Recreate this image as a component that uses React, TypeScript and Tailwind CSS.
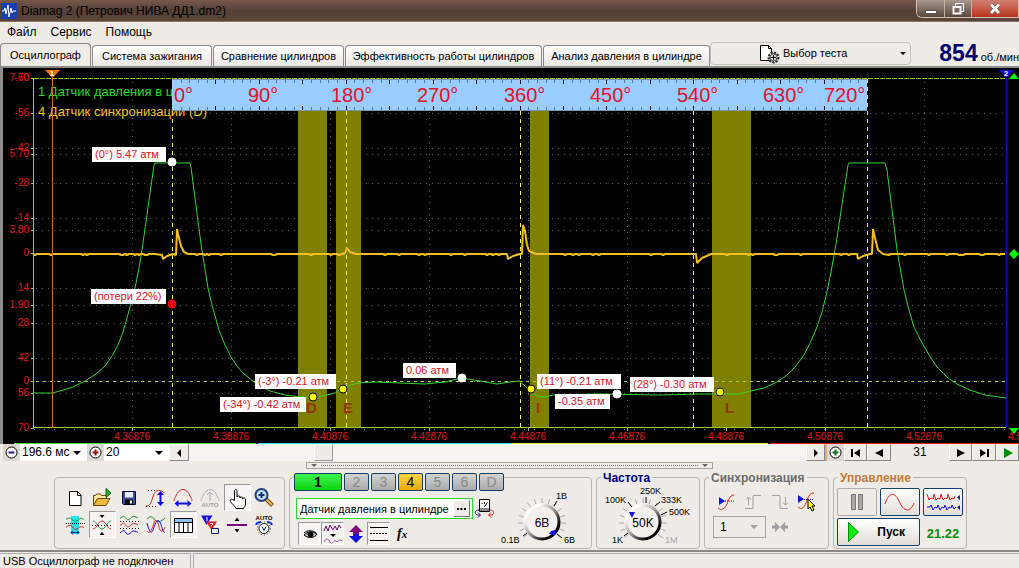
import { useState } from 'react';
import type { ReactNode } from 'react';
import clsx from 'clsx';

const TABS = [
  { label: 'Осциллограф', width: 'w-[91px]' },
  { label: 'Система зажигания', width: 'w-[120px]' },
  { label: 'Сравнение цилиндров', width: 'w-[131px]' },
  { label: 'Эффективность работы цилиндров', width: 'w-[197px]' },
  { label: 'Анализ давления в цилиндре', width: 'w-[167px]' },
];

const CHANNELS = ['1', '2', '3', '4', '5', '6', 'D'];

const Y_LABELS: [string, number][] = [
  ['7.60', 78],
  ['-70', 78],
  ['-56', 113],
  ['-42', 148],
  ['5.70', 154],
  ['-28', 183],
  ['-14', 218],
  ['3.80', 230],
  ['0', 253],
  ['14', 288],
  ['1.90', 305],
  ['28', 323],
  ['42', 358],
  ['0', 381],
  ['56', 393],
  ['70', 428],
];

const X_LABELS: [string, number][] = [
  ['4.36876', 132],
  ['4.38876', 231],
  ['4.40876', 330],
  ['4.42876', 429],
  ['4.44876', 528],
  ['4.46876', 627],
  ['4.48876', 726],
  ['4.50876', 825],
  ['4.52876', 924],
  ['4.54876', 1026],
];

const BANDS = [
  { x: 298, width: 29, letter: 'D', lx: 306 },
  { x: 336, width: 25, letter: 'E', lx: 343 },
  { x: 530, width: 19, letter: 'I', lx: 536 },
  { x: 712, width: 39, letter: 'L', lx: 725 },
];

const ANGLES: [string, number][] = [
  ['0°', 174],
  ['90°', 248],
  ['180°', 331],
  ['270°', 417],
  ['360°', 504],
  ['450°', 590],
  ['540°', 677],
  ['630°', 763],
  ['720°', 824],
];

const CALLOUTS = [
  { text: '(0°) 5.47 атм', x: 92, y: 147, w: 74 },
  { text: '(потери 22%)', x: 91, y: 289, w: 75 },
  { text: '(-3°) -0.21 атм', x: 255, y: 374, w: 81 },
  { text: '(-34°) -0.42 атм', x: 220, y: 397, w: 86 },
  { text: '0.06 атм', x: 403, y: 363, w: 53 },
  { text: '(11°) -0.21 атм', x: 537, y: 374, w: 84 },
  { text: '-0.35 атм', x: 555, y: 394, w: 55 },
  { text: '(28°) -0.30 атм', x: 630, y: 377, w: 84 },
];

const DOTS: [number, number, string, string][] = [
  [172, 162, '#fff', '#fff'],
  [462, 378, '#fff', '#fff'],
  [617, 394, '#fff', '#fff'],
  [172, 304, '#f00000', '#f00000'],
  [313, 397, '#ff0', '#000'],
  [343, 389, '#ff0', '#000'],
  [531, 389, '#ff0', '#000'],
  [720, 392, '#ff0', '#000'],
];

const PRESSURE =
  'M33 393 L52 393 L60 391 L73 387 L85 381 L96 374 L105 366 L112 356 L118 345 L123 332 L127 318 L131 303 L135 288 L139 268 L142 250 L154 165 L155 163 L190 163 L191 167 L201 244 L208 288 L212 305 L219 330 L225 345 L231 357 L237 366 L243 373 L254 382 L270 391 L285 395 L300 397 L318 397 L335 393 L343 388 L357 383 L375 382 L400 383 L425 384 L445 382 L461 378 L480 381 L497 384 L510 382 L519 381 L524 385 L531 391 L537 396 L545 397 L553 395 L600 394 L660 395 L700 394 L738 394 L751 391 L764 388 L775 383 L786 376 L795 367 L804 355 L811 341 L817 327 L822 312 L827 292 L831 272 L836 244 L848 165 L849 163 L885 163 L887 170 L897 250 L904 290 L909 310 L914 327 L921 341 L929 355 L937 367 L948 378 L957 384 L970 390 L985 395 L1006 398';

// x, y pairs replacing the flat zero line around every sync pulse
const PULSES: [number, number][] = [
  [162, 255], [163, 259], [167, 256], [173, 254], [176, 255], [177, 229], [178, 234], [181, 246], [184, 252], [188, 254],
  [345, 253], [347, 248], [350, 252], [356, 254],
  [507, 254], [508, 259], [513, 256], [520, 254], [522, 254], [523, 225], [525, 231], [527, 245], [529, 251], [536, 254],
  [696, 254], [697, 263], [702, 258], [711, 254],
  [857, 254], [858, 259], [863, 256], [870, 254], [872, 254], [873, 229], [875, 238], [878, 250], [883, 254],
];

function syncPath() {
  const points: [number, number][] = [...PULSES];
  let seed = 7;
  for (let x = 33; x <= 1006; x += 2) {
    seed = (seed * 1103 + 377) % 7919;
    const near = PULSES.some(([px]) => Math.abs(px - x) < 6);
    if (!near) points.push([x, seed % 6 === 0 ? 255 : 254]);
  }
  points.sort((a, b) => a[0] - b[0]);
  return 'M' + points.map(([x, y]) => `${x} ${y}`).join(' L');
}

function Scope() {
  const ruler = Array.from({ length: 79 }, (_, i) => i + 1);
  return (
    <svg viewBox="3 68 1016 376" className="block h-auto w-full bg-black font-['Liberation_Sans']" role="img">
      {/* grid */}
      <g stroke="#5a5a5a" strokeDasharray="1 5" shapeRendering="crispEdges">
        {Y_LABELS.slice(2, -1).map(([, y], i) => (
          <line key={i} x1="36" x2="1006" y1={y + 0.5} y2={y + 0.5} />
        ))}
        {X_LABELS.slice(0, -1).map(([, x]) => (
          <line key={x} x1={x + 0.5} x2={x + 0.5} y1="82" y2="427" />
        ))}
      </g>
      {BANDS.map((b) => (
        <rect key={b.letter} x={b.x} y="111" width={b.width} height="316" fill="#808000" />
      ))}
      <g strokeDasharray="3 4" shapeRendering="crispEdges">
        <line x1="36" x2="1006" y1="381.5" y2="381.5" stroke="#b8c840" />
        <line x1="34" x2="1006" y1="78.5" y2="78.5" stroke="#8fc020" strokeDasharray="5 1" />
      </g>
      <g stroke="#f4f45a" strokeDasharray="4 4" shapeRendering="crispEdges">
        {[172, 346, 520, 693, 867].map((x) => (
          <line key={x} x1={x + 0.5} x2={x + 0.5} y1="79" y2="427" />
        ))}
      </g>

      {/* traces */}
      <path d={PRESSURE} fill="none" stroke="#35d435" />
      <path d={syncPath()} fill="none" stroke="#f4c020" strokeWidth="2" strokeLinejoin="bevel" />

      {/* axes */}
      <g shapeRendering="crispEdges" stroke="#9acd32">
        <path d="M33.500 78V428M33 427.500H1006" fill="none" />
        {Y_LABELS.map(([, y], i) => (
          <line key={i} x1="31" x2="34" y1={y + 0.5} y2={y + 0.5} />
        ))}
        {X_LABELS.slice(0, -1).map(([, x]) => (
          <line key={x} x1={x + 0.5} x2={x + 0.5} y1="428" y2="431" stroke="#aaa" />
        ))}
        <line x1="34" x2="1006" y1="429" y2="429" strokeDasharray="1 9" stroke="#888" />
      </g>
      <g fill="#e01818" fontSize="10">
        {Y_LABELS.map(([text, y], i) => (
          <text key={i} x="29" y={y + 3} textAnchor="end">
            {text}
          </text>
        ))}
        {X_LABELS.map(([text, x]) => (
          <text key={text} x={x} y="440" textAnchor="middle">
            {text}
          </text>
        ))}
      </g>

      <g fontSize="13">
        <text x="38" y="96" fill="#22dd22">
          1 Датчик давления в ц
        </text>
        <text x="38" y="116" fill="#f4c020">
          4 Датчик синхронизации (D)
        </text>
      </g>

      {/* crank angle ruler */}
      <rect x="172" y="79" width="695" height="32" fill="#99ccff" />
      <g shapeRendering="crispEdges">
        {ruler.map((i) => {
          const x = Math.round(172 + i * 8.6875) + 0.5;
          const major = i % 5 === 0;
          return (
            <path
              key={i}
              d={major ? `M${x} 79v5M${x} 106v5` : `M${x} 79v4M${x} 107v4`}
              stroke={major ? '#000' : '#5b7a99'}
            />
          );
        })}
        <path d="M172 79.500H867M172 110.500H867" stroke="#7d93a8" />
      </g>
      <g fill="#e3122c" fontSize="20">
        {ANGLES.map(([text, x]) => (
          <text key={text} x={x} y="102">
            {text}
          </text>
        ))}
      </g>

      {/* cursors */}
      <path d="M52.500 78V428" stroke="#d07010" shapeRendering="crispEdges" />
      <path d="M45 70h15l-7.500 8z" fill="#ff6a10" />
      <path d="M1006.500 78V428" stroke="#0808d8" shapeRendering="crispEdges" />
      <path d="M999 70h15l-7.500 8z" fill="#1010e0" />
      <g fill="#fff" fontSize="8" fontWeight="bold" textAnchor="middle">
        <text x="52" y="76">1</text>
        <text x="1006" y="76">2</text>
      </g>
      <path d="M1009 79h10l-5-6zM1009 428h10l-5 6zM1009 254l5-5 5 5-5 5z" fill="#0f0" />

      {/* valve letters, markers, callouts */}
      <g fill="#993300" fontSize="15" fontWeight="bold">
        {BANDS.map((b) => (
          <text key={b.letter} x={b.lx} y="413">
            {b.letter}
          </text>
        ))}
      </g>
      {CALLOUTS.map((c) => (
        <g key={c.text}>
          <rect x={c.x} y={c.y} width={c.w} height="15" fill="#fff" />
          <text x={c.x + 3} y={c.y + 11} fontSize="11" fill="#d8142a">
            {c.text}
          </text>
        </g>
      ))}
      {DOTS.map(([x, y, fill, stroke]) => (
        <circle key={`${x}-${y}`} cx={x} cy={y} r="4" fill={fill} stroke={stroke} />
      ))}

      {/* recorded buffer strip */}
      <g shapeRendering="crispEdges">
        <path d="M14 443.500H256" stroke="#4be04b" />
        <path d="M258 443.500H512" stroke="#2ee6f0" />
        <path d="M512 443.500H768" stroke="#f0f020" />
        <path d="M770 443.500H1019" stroke="#e81818" />
      </g>
    </svg>
  );
}

function IconButton({ label, pressed, size = 'w-[27px] h-[27px]', children }: { label: string; pressed?: boolean; size?: string; children: ReactNode }) {
  return (
    <button
      aria-label={label}
      title={label}
      className={clsx(
        'flex items-center justify-center border',
        size,
        pressed ? 'border-t-[#9a9a9a] border-l-[#9a9a9a] border-r-white border-b-white bg-[#f6f4f2]' : 'border-transparent',
      )}
    >
      <svg viewBox="0 0 24 24" className="h-6 w-6 shrink-0" fill="none" stroke="#000">
        {children}
      </svg>
    </button>
  );
}

function ToolsPanel() {
  return (
    <div className="grid h-full w-[231px] shrink-0 grid-cols-[repeat(8,27px)] content-start justify-center rounded border border-[#b9b5b1] pt-[6px]">
      <IconButton label="Новый">
        <path d="M6.500 5.500h8l3.500 3.500v10.500h-11.500z" fill="#fff" />
        <path d="M14.500 5.500v4h3.500" />
      </IconButton>
      <IconButton label="Открыть">
        <path d="M3.500 19.500v-10h2l1-1.500h4l1 1.500h5v3" fill="#ffe9a0" stroke="#6b4a10" />
        <path d="M3.500 19.500l4-7h12.500l-4 7z" fill="#f0b840" stroke="#6b4a10" />
        <path d="M16 2.500l5 4.500-5 4.500z" fill="#20b030" stroke="#0a6010" />
      </IconButton>
      <IconButton label="Сохранить">
        <path d="M5.500 5.500h13v13h-12l-1-1z" fill="#3c4c9c" stroke="#000030" />
        <path d="M8 6h8v5.500h-8z" fill="#e8eef8" stroke="none" />
        <path d="M8 13.500h8v4.500h-8z" fill="#111" stroke="none" />
        <path d="M13 14.500h2v3h-2z" fill="#fff" stroke="none" />
      </IconButton>
      <IconButton label="Размах по вертикали">
        <path d="M4 4.500h9M2 20.500h11" strokeDasharray="1 2" />
        <path d="M2 20c4 0 5-3 6.500-8s3-7.500 6-7.500 4 1 6 2.500" stroke="#e02020" />
        <path d="M16.500 7v11" stroke="#1010e0" strokeWidth="2" />
        <path d="M13 9l3.500-4 3.500 4zM13 16l3.500 4 3.500-4z" fill="#1010e0" stroke="none" />
      </IconButton>
      <IconButton label="Размах по горизонтали">
        <path d="M3 15c0-2 1-3 2-5 1.500-4 4-6.500 7-6.500s5.500 2.500 7 6.500c1 2 2 3 2 5" stroke="#e02020" />
        <path d="M6 17.500h12" stroke="#1010e0" strokeWidth="2" />
        <path d="M7.500 14l-4 3.500 4 3.500zM16.500 14l4 3.500-4 3.500z" fill="#1010e0" stroke="none" />
      </IconButton>
      <IconButton label="Авто">
        <path d="M3 15c0-2 1-3 2-5 1.500-4 4-6.500 7-6.500s5.500 2.500 7 6.500c1 2 2 3 2 5" stroke="#b0b0b0" />
        <path d="M12 6v9M9 9l3-3 3 3" stroke="#a8a8a8" />
        <text x="12" y="21" textAnchor="middle" fontSize="6" fontWeight="bold" fill="#a0a0a0" stroke="none">AUTO</text>
      </IconButton>
      <IconButton label="Рука" pressed>
        <path
          d="M9.500 14.500V5c0-2 2.500-2 2.500 0v6c0-1.500 3-1.500 3 0v1c0-1.500 2.500-1.500 2.500 0v1c0-1.500 3-1.500 3 .5V18c0 2-1.500 3-2 4.500h-7.500c-.5-2-4-4.500-5.500-7-1-2 1-3 2-2z"
          fill="#fff"
        />
      </IconButton>
      <IconButton label="Увеличить">
        <path d="M14 13l6.500 6.500" stroke="#6b4a10" strokeWidth="4" />
        <path d="M14 13l6 6" stroke="#f0b840" strokeWidth="2" />
        <circle cx="9.500" cy="9" r="6" fill="#c4ddf4" stroke="#24407c" strokeWidth="2" />
        <path d="M6.500 9h6M9.500 6v6" stroke="#1a2f70" strokeWidth="2" />
      </IconButton>

      <IconButton label="Участок">
        <path d="M8 3h8v18H8z" fill="#20e8f0" stroke="none" />
        <path d="M3 6.500c3-2 4-2 6 0s5 2 7 0 3-1 5 0" stroke="#109030" />
        <path d="M3 14.500c3-3 5-3 7 0s5 1 6 0 3-1 5 0" stroke="#e02020" />
        <path d="M3 10.500h19" strokeDasharray="1 1" />
        <path d="M8 19.500h8M10 17.500l-2 2 2 2M14 17.500l2 2-2 2" stroke="#102080" />
      </IconButton>
      <IconButton label="Наложение" pressed>
        <path d="M9.500 2h5L12 5zM9.500 22h5L12 19z" fill="#000" stroke="none" />
        <path d="M3 8c4 0 5 8 9 8s5-8 9-8" stroke="#109030" />
        <path d="M3 16c4 0 5-8 9-8s5 8 9 8" stroke="#e02020" />
        <path d="M2 12.500h20" strokeDasharray="1 2" />
      </IconButton>
      <IconButton label="Разделение">
        <path d="M3 5.500c3-3 4-3 6 0s4 0 6-1.500 4 0 6 1" stroke="#109030" />
        <path d="M3 12.500c3-3 4-3 6 0s4 0 6-1.500 4 0 6 1" stroke="#e02020" />
        <path d="M3 20c3-3 4-3 6 0s4 0 6-1.500 4 0 6 1" stroke="#1010e0" />
        <path d="M3 8.500h19M3 15.500h19" strokeDasharray="1 2" />
      </IconButton>
      <IconButton label="Сигналы">
        <path d="M3 6c4-4 6-2 8 1s6 2 10-2" stroke="#109030" />
        <path d="M3 10c2 8 4 12 6 7s3-11 6-9 3 13 6 11" stroke="#1010e0" />
        <path d="M3 18c3 4 5-2 7-8s4-1 5 4 4 6 6 0" stroke="#e02020" />
      </IconButton>
      <IconButton label="Таблица" pressed>
        <path d="M3.500 5.500h18v14h-18z" fill="#fff" />
        <path d="M4 6h17v3H4z" fill="#8cc4f0" stroke="none" />
        <path d="M3.500 9.500h18M8 9v10M12.500 9v10M17 9v10" />
      </IconButton>
      <IconButton label="Маркеры">
        <path d="M3 2.500h11.500L8.500 12z" fill="#1010e0" stroke="none" />
        <path d="M8 8.500h11L13.500 17z" fill="#e81818" stroke="none" />
        <path d="M9 4v4M12 10.500h3l-2 3" stroke="#fff" />
        <path d="M13.500 15.500h7v5h-7z" fill="#fff" stroke="#102080" />
      </IconButton>
      <IconButton label="Уровень">
        <path d="M2 12h20" stroke="#800080" strokeWidth="2" />
        <path d="M9.500 8h5L12 4.500zM9.500 16h5l-2.500 3.500z" fill="#000" stroke="none" />
      </IconButton>
      <IconButton label="Автонастройка">
        <text x="12" y="7" textAnchor="middle" fontSize="6" fontWeight="bold" fill="#000" stroke="none">AUTO</text>
        <circle cx="12" cy="15.500" r="6.500" stroke="#333" strokeDasharray="1 2" />
        <circle cx="12" cy="15.500" r="5" fill="#fff" stroke="#222" />
        <path d="M10 13.500l2 4 2-4" stroke="#1010a0" />
        <path d="M4 12c1-3 3-3 5-3M20 12c-1-3-3-3-5-3" stroke="#1838c0" strokeWidth="2" />
      </IconButton>
    </div>
  );
}

function Knob({ value, pointer, labels }: { value: string; pointer: string; labels: { text: string; x: number; y: number; dim?: boolean; tick: string }[] }) {
  const ticks = Array.from({ length: 15 }, (_, i) => -220 + (i * 260) / 14);
  const id = `ring-${value}`;
  return (
    <svg viewBox="-46 -44 96 70" className="h-[70px] w-24 shrink-0 font-['Liberation_Sans']">
      <defs>
        <linearGradient id={id} x1="0" y1="0" x2="1" y2="1">
          <stop offset="0.2" stopColor="#fff" />
          <stop offset="0.5" stopColor="#999" />
          <stop offset="0.8" stopColor="#000" />
        </linearGradient>
      </defs>
      {ticks.map((t) => {
        const a = (t * Math.PI) / 180;
        return <line key={t} x1={Math.cos(a) * 19} y1={Math.sin(a) * 19} x2={Math.cos(a) * 24} y2={Math.sin(a) * 24} stroke="#aaa" />;
      })}
      <circle r="17" fill="#f3f0ed" stroke={`url(#${id})`} strokeWidth="3" />
      <path d={pointer} fill="#1010e0" />
      <text y="5" textAnchor="middle" fontSize="12">
        {value}
      </text>
      {labels.map((l) => (
        <g key={l.text}>
          <path d={l.tick} stroke={l.dim ? '#aaa' : '#000'} />
          <text x={l.x} y={l.y} fontSize="9" fill={l.dim ? '#aaa' : '#000'}>
            {l.text}
          </text>
        </g>
      ))}
    </svg>
  );
}

function ChannelPanel() {
  const [name, setName] = useState('Датчик давления в цилиндре');
  return (
    <div className="flex h-full w-[303px] shrink-0 rounded border border-[#b9b5b1]">
      <div className="-mt-[5px] flex shrink-0 flex-col pl-1">
        <div className="flex gap-0.5 bg-[#efebe7]">
          {CHANNELS.map((c) => (
            <button
              key={c}
              className={clsx(
                'h-[18px] rounded-xs border border-[#12406e] text-sm leading-none',
                c === '1' && 'w-12 bg-linear-to-b from-[#3cf04c] to-[#00d800] font-bold text-black',
                c === '4' && 'w-[25px] bg-linear-to-b from-[#ffd640] to-[#e8a800] text-black',
                c !== '1' && c !== '4' && 'w-[25px] bg-linear-to-b from-[#d4d4d4] to-[#aaaaaa] text-[#888]',
              )}
            >
              {c}
            </button>
          ))}
        </div>
        <div className="mt-[7px] ml-0.5 flex items-center gap-px">
          <div className="flex h-[21px] w-[177px] items-center border border-[#2bd82b] bg-white">
            <input
              aria-label="Название канала"
              value={name}
              onChange={(e) => setName(e.target.value)}
              className="h-full min-w-0 flex-1 bg-transparent pl-[3px] text-[11px] outline-none"
            />
            <button aria-label="Выбрать датчик" className="mr-0.5 flex h-[17px] w-[17px] items-center justify-center border border-t-white border-l-white border-r-[#777] border-b-[#777] bg-[#efebe7]">
              <svg viewBox="0 0 9 2" className="h-0.5 w-[9px]">
                <path d="M0 0h2v2H0zM3.500 0h2v2h-2zM7 0h2v2H7z" />
              </svg>
            </button>
          </div>
          <IconButton label="Поменять местами" size="w-[20px] h-[21px]">
            <path d="M7.500 2.500h10v12h-10z" fill="#fff" />
            <path d="M8 11h9v3H8z" fill="#888" stroke="none" />
            <path d="M9.500 6l1 1M12.500 5v2M15.500 5.500l-3 4" />
            <path d="M7 13c-4 0-5 3-2 5h3M6 15.500l2.500 2.500L6 20.500" stroke="#102080" />
            <path d="M18 13c4 0 5 3 2 5h-3M19 15.500L16.500 18l2.500 2.500" stroke="#e02020" />
          </IconButton>
        </div>
        <div className="mt-[3px] ml-1 flex">
          <IconButton label="Видимость" pressed size="w-[23px] h-[23px]">
            <path d="M6 13c4-4 8-4 13-1-2 4-9 5-13 1z" fill="#bbb" />
            <path d="M6 11c3-3 9-3 12 0" />
            <circle cx="12.500" cy="12.500" r="2.500" fill="#000" />
          </IconButton>
          <IconButton label="Фильтр" pressed size="w-[23px] h-[23px]">
            <path d="M3 9l2-5 2 5 2-6 3 5 2-4 2 4 2-5 2 3" stroke="#800080" />
            <path d="M9 12h6l-3 3z" fill="#000" stroke="none" />
            <path d="M3 20c2-4 4-4 6 0s4-3 6-1 3-3 6 0" stroke="#b040b0" />
          </IconButton>
          <IconButton label="Сдвиг" size="w-[23px] h-[23px]">
            <path d="M12 3l7 7h-4v2H9v-2H5z" fill="#800080" stroke="none" />
            <path d="M12 21l7-7h-4v-2H9v2H5z" fill="#1010e0" stroke="none" />
          </IconButton>
          <IconButton label="Линии" pressed size="w-[23px] h-[23px]">
            <path d="M3 5.500h18M3 18.500h18" />
            <path d="M3 11.500h18" strokeDasharray="2 1" />
          </IconButton>
          <IconButton label="Формула" size="w-[23px] h-[23px]">
            <text x="7" y="16" fontSize="14" fontWeight="bold" fontStyle="italic" fontFamily="Liberation Serif" fill="#000" stroke="none">
              f<tspan fontSize="11">x</tspan>
            </text>
          </IconButton>
        </div>
      </div>
      {/* the empty left side of the dial runs under the channel row */}
      <div className="pointer-events-none -ml-2 self-start">
        <Knob
          value="6В"
          pointer="M9 9l4-1v5l-6-1z"
          labels={[
            { text: '0.1В', x: -41, y: 21, tick: 'M-19 14l4-3' },
            { text: '1В', x: 14, y: -23, tick: 'M12 -16l3-5' },
            { text: '6В', x: 22, y: 21, tick: 'M15 12l5 4' },
          ]}
        />
      </div>
    </div>
  );
}

function Group({ title, color, width, children }: { title: string; color: string; width: string; children: ReactNode }) {
  return (
    <div className={clsx('relative h-full shrink-0 rounded border border-[#b9b5b1]', width)}>
      <h2 className={clsx('absolute -top-[7px] left-1 bg-[#efebe7] px-0.5 text-xs leading-[14px] font-bold', color)}>{title}</h2>
      {children}
    </div>
  );
}

function SyncPanel() {
  return (
    <Group title="Синхронизация" color="text-[#6c6c6c]" width="w-[125px]">
      <div className="flex px-2 pt-[9px]">
        <IconButton label="Синхронизация по уровню">
          <path d="M5 8l6 4-6 4z" fill="#1010e0" stroke="none" />
          <path d="M9 12h12" stroke="#1010e0" strokeDasharray="1 1" />
          <path d="M4 19c3 3 7 1 9-4s3-9 7-9" stroke="#e02020" />
        </IconButton>
        <IconButton label="Передний фронт">
          <path d="M4 19.500h8V6.500h8M7.500 16V8M5 10.500L7.500 8l2.500 2.500" stroke="#a0a0a0" />
        </IconButton>
        <IconButton label="Задний фронт">
          <path d="M4 6.500h8v13h8M17.500 8v8M15 13.500l2.500 2.500 2.500-2.500" stroke="#a0a0a0" />
        </IconButton>
        <IconButton label="Выбор уровня">
          <path d="M3 6l6 4-6 4z" fill="#1010e0" stroke="none" />
          <path d="M7 10.500h12" stroke="#1010e0" strokeDasharray="1 1" />
          <path d="M3 18c3 3 6 1 8-4s3-10 8-10" stroke="#e02020" />
          <path d="M13 10l7 7h-3l2 4-2 1-2-4-2 2z" fill="#ff0" />
        </IconButton>
      </div>
      <div className="mt-0.5 flex items-center gap-1 pl-2">
        <div className="relative">
          <select aria-label="Канал синхронизации" className="block h-[22px] w-[53px] appearance-none border border-[#a5a5a5] pl-1.5 text-xs">
            <option>1</option>
          </select>
          <svg viewBox="0 0 8 4" className="pointer-events-none absolute top-[9px] right-2 h-1 w-2">
            <path d="M0 0h8l-4 4z" fill="#a0a0a0" />
          </svg>
        </div>
        <IconButton label="Сжать" size="w-[20px] h-[20px]">
          <path d="M4 12h5M20 12h-5" stroke="#a0a0a0" strokeWidth="3" />
          <path d="M7 7l5 5-5 5zM17 7l-5 5 5 5z" fill="#a0a0a0" stroke="none" />
        </IconButton>
      </div>
    </Group>
  );
}

const CONTROL_BUTTON = 'flex h-[28px] items-center rounded-xs border border-[#12406e] bg-linear-to-b from-white to-[#e2ded9]';

function ControlPanel() {
  return (
    <Group title="Управление" color="text-[#c07c3c]" width="w-[134px]">
      <div className="grid grid-cols-3 gap-x-[3px] gap-y-0.5 px-[3px] pt-[10px]">
        <button aria-label="Пауза" className="flex h-[28px] items-center justify-center rounded-xs border border-[#b0acb0]">
          <svg viewBox="0 0 12 16" className="h-4 w-3" fill="#a8a8a8" stroke="#777">
            <path d="M.5.5h4v15h-4zM7.500.5h4v15h-4z" />
          </svg>
        </button>
        <button aria-label="Одиночный сигнал" className={clsx(CONTROL_BUTTON, 'justify-center')}>
          <svg viewBox="0 0 32 20" className="h-5 w-8" fill="none" stroke="#e02020">
            <path d="M1 12C4 2 10-2 15 9s11 12 15 2" />
          </svg>
        </button>
        <button aria-label="Непрерывный сигнал" className={clsx(CONTROL_BUTTON, 'justify-center')}>
          <svg viewBox="0 0 34 20" className="h-5 w-[34px]" fill="none">
            <path d="M1 2l2 6 2-2 2 1 1-5 2 6 2-2 2 1 1-5 2 6 2-2 2 1 1-5 2 6 2-2 2 1 1-3" stroke="#e02020" />
            <path d="M1 15h3l1-2 2 5 2-3 2 1 1-3 2 5 2-3 2 1 1-3 2 5 2-3 2 1 1-3 2 4 2-2" stroke="#1010e0" />
            <path d="M34 3v5l-3-2.500zM34 13v5l-3-2.500z" fill="#102080" />
          </svg>
        </button>
        <button className={clsx(CONTROL_BUTTON, 'col-span-2 justify-between pr-[14px] pl-[10px] text-xs font-bold')}>
          <svg viewBox="0 0 11 20" className="h-5 w-[11px]">
            <path d="M.5.5l10 9.500-10 9.500z" fill="#10f010" stroke="#0a8a0a" />
          </svg>
          Пуск
        </button>
        <span className="self-center pt-1 text-center text-[13px] font-bold text-[#0a8a0a]">21.22</span>
      </div>
    </Group>
  );
}

function StepButton({ label, d, width = 'w-[23px]', color = '#000' }: { label: string; d: string; width?: string; color?: string }) {
  return (
    <button
      aria-label={label}
      className={clsx('flex h-full shrink-0 items-center justify-center border border-t-white border-l-white border-r-[#888] border-b-[#888] bg-[#efebe7]', width)}
    >
      <svg viewBox="0 0 10 10" className="h-[10px] w-[10px]" fill={color}>
        <path d={d} />
      </svg>
    </button>
  );
}

function ZoomButton({ label, plus, color }: { label: string; plus?: boolean; color: string }) {
  return (
    <button aria-label={label} className="flex h-full w-[17px] shrink-0 items-center justify-center bg-[#ddd9d5]">
      <svg viewBox="0 0 13 13" className="h-[13px] w-[13px]">
        <circle cx="6.500" cy="6.500" r="5.500" fill="#fff" stroke="#000" />
        <path d={plus ? 'M3.500 6.500h6M6.500 3.500v6' : 'M3.500 6.500h6'} stroke={color} strokeWidth="2" />
      </svg>
    </button>
  );
}

function SmallSelect({ label, value, width }: { label: string; value: string; width: string }) {
  return (
    <div className={clsx('relative h-full shrink-0', width)}>
      <select aria-label={label} className="block h-full w-full appearance-none bg-white pl-0.5 text-xs leading-[17px]">
        <option>{value}</option>
      </select>
      <svg viewBox="0 0 8 4" className="pointer-events-none absolute top-[7px] right-1.5 h-1 w-2">
        <path d="M0 0h8l-4 4z" />
      </svg>
    </div>
  );
}

function TimeBar() {
  return (
    <div className="flex h-[17px] pl-[3px]">
      <ZoomButton label="Уменьшить" color="#1a1a80" />
      <SmallSelect label="Развёртка" value="196.6 мс" width="w-[67px]" />
      <ZoomButton label="Увеличить" plus color="#901010" />
      <SmallSelect label="Масштаб" value="20" width="w-[65px]" />
      <StepButton label="Прокрутить влево" d="M7 1v8L3 5z" width="w-[20px]" />
      <div className="flex min-w-0 flex-1 bg-[#f6f4f2] pl-[125px]">
        <span className="h-full w-[19px] border border-t-white border-l-white border-r-[#999] border-b-[#999] bg-[#efebe7]" />
      </div>
      <StepButton label="Прокрутить вправо" d="M3 1v8l4-4z" width="w-[19px]" />
      <span className="w-0.5 bg-[#dca878]" />
      <ZoomButton label="Добавить" plus color="#107010" />
      <StepButton label="В начало" d="M0 1h2v8H0zM9 1v8L3 5z" />
      <StepButton label="Назад" d="M9 1v8L1 5z" width="w-[24px]" />
      <span className="w-[58px] shrink-0 text-center text-xs leading-[17px]">31</span>
      <StepButton label="Вперёд" d="M1 1v8l8-4z" />
      <StepButton label="В конец" d="M8 1h2v8H8zM1 1v8l6-4z" width="w-[24px]" />
      <StepButton label="Воспроизвести" d="M1 0v10l9-5z" width="w-[23px]" color="#0a8a0a" />
    </div>
  );
}

export default function App() {
  const [tab, setTab] = useState(0);

  return (
    <div className="flex min-h-screen w-full flex-col overflow-hidden bg-[#efebe7] font-['Liberation_Sans',sans-serif] text-black">
      {/* Title bar */}
      <header className="flex h-[22px] items-center border-b border-[#8a7468] bg-linear-to-b from-[#77584a] via-[#554037] to-[#5a453b] pl-px">
        <svg viewBox="0 0 16 16" className="h-4 w-4">
          <path d="M0 0h16v16H0z" fill="#1840b0" />
          <path d="M1 8h2l1-3 1 6 2-9 1 12 2-9 1 5 1-2h3" fill="none" stroke="#fff" />
        </svg>
        <h1 className="ml-1 text-xs text-black">Diamag 2 (Петрович НИВА ДД1.dm2)</h1>
        <div className="ml-auto flex h-[18px] self-start overflow-hidden rounded-bl-md border border-t-0 border-[#d0c0b8]">
          <button aria-label="Свернуть" className="flex w-[28px] items-center justify-center border-r border-[#c0b0a8] bg-linear-to-b from-[#a89890] to-[#5c463c]">
            <svg viewBox="0 0 12 12" className="h-3 w-3">
              <path d="M.5 7.500h11v3H.5z" fill="#fff" stroke="#555" />
            </svg>
          </button>
          <button aria-label="Развернуть" className="flex w-[27px] items-center justify-center border-r border-[#c0b0a8] bg-linear-to-b from-[#a89890] to-[#5c463c]">
            <svg viewBox="0 0 12 12" className="h-3 w-3" fill="none" stroke="#fff">
              <path d="M3.500 2.500v-2h8v8h-2" />
              <path d="M1.500 4h7v6.500h-7z" strokeWidth="2" />
            </svg>
          </button>
          <button aria-label="Закрыть" className="flex w-[46px] items-center justify-center bg-linear-to-b from-[#d08070] to-[#b83018]">
            <svg viewBox="0 0 12 12" className="h-3 w-3">
              <path d="M2 1.500l8 8.500M10 1.500L2 10" stroke="#444" strokeWidth="4" />
              <path d="M2 1.500l8 8.500M10 1.500L2 10" stroke="#fff" strokeWidth="3" />
            </svg>
          </button>
        </div>
      </header>

      <nav className="flex h-5 items-center gap-[14px] pl-[7px] text-xs">
        <button>Файл</button>
        <button>Сервис</button>
        <button>Помощь</button>
      </nav>

      {/* Tabs */}
      <div className="flex h-[26px] items-end border-b-2 border-[#8c8c8c]">
        <div role="tablist" className="flex shrink-0 items-end gap-px">
          {TABS.map((t, i) => (
            <button
              key={t.label}
              role="tab"
              aria-selected={i === tab}
              onClick={() => setTab(i)}
              className={clsx(
                'rounded-t border border-b-0 border-[#8a8a8a] text-[11px] whitespace-nowrap',
                t.width,
                i === tab ? 'h-[23px] bg-[#efebe7]' : 'h-[21px] bg-linear-to-b from-white to-[#ebe7e3]',
              )}
            >
              {t.label}
            </button>
          ))}
        </div>
        <button className="mb-px flex h-[23px] w-[201px] shrink-0 items-center rounded border border-[#c4c0bc] pr-1 pl-[48px] text-[11px]">
          <svg viewBox="0 0 22 20" className="mr-0.5 h-5 w-[22px]" fill="none" stroke="#000">
            <path d="M1.500 1.500h8l3 3v12h-11z" fill="#fff" />
            <path d="M9.500 1.500v3h3" />
            <circle cx="14.500" cy="13.500" r="4.500" fill="#eee" stroke="#333" strokeWidth="3" strokeDasharray="2 1" />
            <circle cx="14.500" cy="13.500" r="3.500" fill="#ddd" stroke="#555" />
            <path d="M14.500 11v5M12 13.500h5" />
          </svg>
          Выбор теста
          <svg viewBox="0 0 6 3" className="mr-0 ml-auto h-[3px] w-1.5">
            <path d="M0 0h6L3 3z" />
          </svg>
        </button>
        <p className="ml-auto flex items-baseline gap-[3px] self-start leading-[22px] whitespace-nowrap">
          <strong className="text-[23px] text-[#000070]">854</strong>
          <span className="text-[11px]">об./мин</span>
        </p>
      </div>

      <main className="border-l-[3px] border-[#8c8c8c]">
        <Scope />
      </main>
      <TimeBar />

      {/* Splitter */}
      <div className="mx-auto mt-px flex h-[7px] w-2/5 items-center gap-1 border border-[#a8a4a0] px-1">
        <svg viewBox="0 0 6 3" className="h-[3px] w-1.5 shrink-0" fill="#666">
          <path d="M0 0h6L3 3z" />
        </svg>
        <span className="h-px flex-1 border-t border-dotted border-[#777]" />
        <svg viewBox="0 0 6 3" className="h-[3px] w-1.5 shrink-0" fill="#666">
          <path d="M0 0h6L3 3z" />
        </svg>
      </div>

      <section className="mt-2 flex h-[72px] justify-center gap-1 pl-0.5">
        <ToolsPanel />
        <ChannelPanel />
        <Group title="Частота" color="text-[#000080]" width="w-[104px]">
          <div className="flex">
            <Knob
              value="50K"
              pointer="M-14-10h6l-3 6z"
              labels={[
                { text: '1K', x: -31, y: 21, tick: 'M-19 14l4-3' },
                { text: '100K', x: -38, y: -19, tick: 'M-15-20l4 5' },
                { text: '250K', x: -3, y: -28, tick: 'M3-25v6' },
                { text: '333K', x: 18, y: -19, tick: 'M12-16l5-4' },
                { text: '500K', x: 26, y: -7, tick: 'M18-7l6-3' },
                { text: '1M', x: 22, y: 21, dim: true, tick: 'M15 12l5 4' },
              ]}
            />
          </div>
        </Group>
        <SyncPanel />
        <ControlPanel />
      </section>

      <footer className="mt-auto flex h-[18px] items-stretch border-t-2 border-[#8c8884] pt-px text-[11px]">
        <p className="w-[191px] border-t border-r border-[#b0acb0] pl-[3px] leading-[15px] whitespace-nowrap">USB Осциллограф не подключен</p>
        <p className="ml-0.5 flex-1 border-t border-l border-[#b0acb0]" />
      </footer>
    </div>
  );
}
